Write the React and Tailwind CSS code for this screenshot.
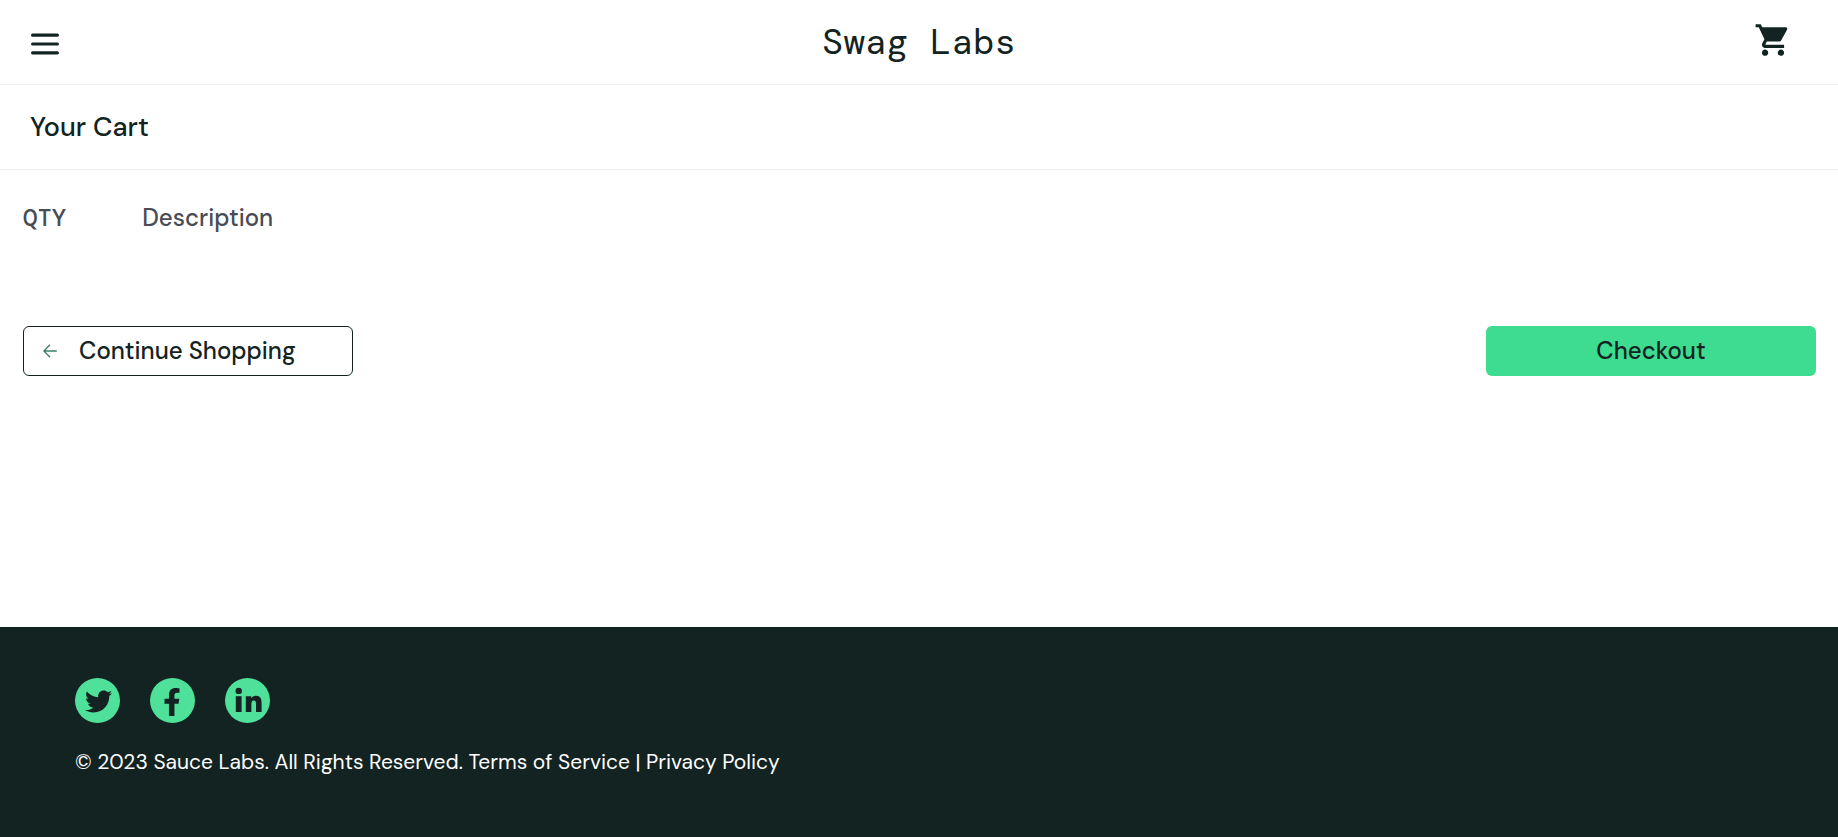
import React from "react";
import { FaFacebookF, FaTwitter } from "react-icons/fa";
import { MdShoppingCart } from "react-icons/md";

function LinkedInMark({ className }) {
  return (
    <svg viewBox="0 0 45 45" className={className} fill="currentColor">
      <circle cx="13.7" cy="12.9" r="3.2" />
      <path d="M10.8 18.2H16.6V34H10.8Z" />
      <path d="M20.8 18.2H26.2V20.2C27.1 18.7 28.8 17.7 31 17.7C35.4 17.7 36.6 20.7 36.6 25V34H31V26C31 24 30.7 22.4 28.8 22.4C26.9 22.4 26.4 23.9 26.4 26V34H20.8Z" />
    </svg>
  );
}

const socials = [
  { label: "Twitter", Icon: FaTwitter, size: "size-[27px]", pad: "pt-[2px] pl-px" },
  { label: "Facebook", Icon: FaFacebookF, size: "size-[28px]", pad: "pt-[3px] pr-[2px]" },
  { label: "LinkedIn", Icon: LinkedInMark, size: "size-[45px]", pad: "p-0" },
];

function Header() {
  return (
    <header>
      <div className="grid h-[85px] grid-cols-3 items-center border-b border-[#ededed] px-[30px]">
        <button type="button" aria-label="Open menu" className="mt-1 justify-self-start">
          <svg viewBox="0 0 30 24" className="h-6 w-[30px]" fill="none" stroke="currentColor" strokeWidth="3.2" strokeLinecap="round">
            <path d="M2.6 3.2H27.4M2.6 12H27.4M2.6 20.8H27.4" />
          </svg>
        </button>
        <div className="justify-self-center font-['DM_Mono','Liberation_Mono',monospace] text-4xl">Swag Labs</div>
        <a href="#cart" aria-label="Shopping cart" className="mr-4 mb-1 justify-self-end">
          <MdShoppingCart className="size-[38px]" />
        </a>
      </div>
      <div className="flex h-[85px] items-center border-b border-[#ededed] px-[30px]">
        <h1 className="text-[27px] leading-9 font-medium">Your Cart</h1>
      </div>
    </header>
  );
}

function Cart() {
  return (
    <main className="grow pt-[30px] pr-[22px] pl-[23px]">
      <div className="flex h-9 items-center gap-[76px] text-2xl font-medium text-[#484c55]">
        <div className="font-['DM_Mono','Liberation_Mono',monospace]">QTY</div>
        <div>Description</div>
      </div>
      <div className="mt-[90px] flex justify-between">
        <button type="button" className="flex h-[50px] w-[330px] items-center rounded-md border border-[#132322] pl-[19px] text-2xl font-medium">
          <svg viewBox="0 0 14 14" className="mr-[22px] size-[14px]" fill="none" stroke="#3b7f65" strokeWidth="1.4">
            <path d="M13.8 7H1M7 0.8L0.9 7L7 13.2" />
          </svg>
          Continue Shopping
        </button>
        <button type="button" className="h-[50px] w-[330px] rounded-md bg-[#3ddc91] text-2xl font-medium">
          Checkout
        </button>
      </div>
    </main>
  );
}

function Footer() {
  return (
    <footer className="h-[210px] bg-[#132322] px-[75px] pt-[51px] text-white">
      <ul className="flex gap-[30px]">
        {socials.map(({ label, Icon, size, pad }) => (
          <li key={label}>
            <a href="#social" aria-label={label} className={"flex size-[45px] items-center justify-center rounded-full bg-[#4fe19a] text-[#132322] " + pad}>
              <Icon className={size} />
            </a>
          </li>
        ))}
      </ul>
      <p className="mt-6 text-[21px] leading-[30px]">
        © 2023 Sauce Labs. All Rights Reserved. Terms of Service | Privacy Policy
      </p>
    </footer>
  );
}

export default function App() {
  return (
    <div className="flex min-h-screen flex-col bg-white font-['DM_Sans','Open_Sans',sans-serif] text-[#132322]">
      <Header />
      <Cart />
      <Footer />
    </div>
  );
}
